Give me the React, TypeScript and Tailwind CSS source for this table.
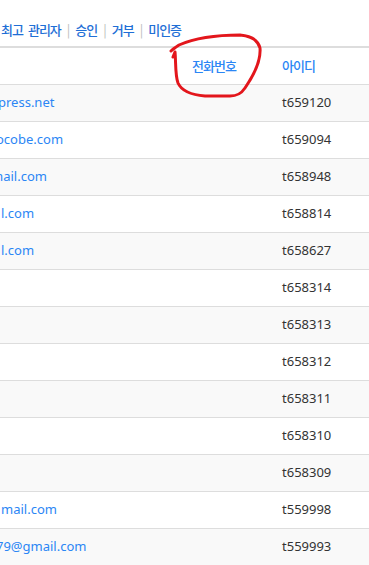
import React from 'react'

type Row = {
  id: string
  email: string
  shift: string
  striped: boolean
}

const rows: Row[] = [
  { id: 't659120', email: 'press.net', shift: 'ml-[-2px]', striped: true },
  { id: 't659094', email: 'ocobe.com', shift: 'ml-[-4px]', striped: false },
  { id: 't658948', email: 'mail.com', shift: 'ml-[-9px]', striped: true },
  { id: 't658814', email: 'l.com', shift: 'ml-[1px]', striped: false },
  { id: 't658627', email: 'l.com', shift: 'ml-[1px]', striped: true },
  { id: 't658314', email: '', shift: '', striped: false },
  { id: 't658313', email: '', shift: '', striped: true },
  { id: 't658312', email: '', shift: '', striped: false },
  { id: 't658311', email: '', shift: '', striped: true },
  { id: 't658310', email: '', shift: '', striped: false },
  { id: 't658309', email: '', shift: '', striped: true },
  { id: 't559998', email: 'mail.com', shift: 'ml-[1px]', striped: false },
  { id: 't559993', email: '79@gmail.com', shift: 'ml-[-4px]', striped: true },
]

const filters = ['승인', '거부', '미인증']

const App = () => {
  return (
    <div className="relative w-[369px] h-[565px] overflow-hidden bg-white font-['Noto_Sans','Noto_Sans_CJK_KR',sans-serif]">
      {/* filter links */}
      <div className="h-[46px] pt-[21px] flex items-start gap-[6px] text-[13px] leading-[18px] tracking-[-1px] font-['Noto_Sans_CJK_KR',sans-serif]">
        <a className="ml-[1px] text-[#1f6fd6] font-medium">
          최고<span className="inline-block w-[5px]" />관리자
        </a>
        {filters.map((f) => (
          <React.Fragment key={f}>
            <span className="text-[#bbbbbb]">|</span>
            <a className="text-[#1f6fd6] font-medium">{f}</a>
          </React.Fragment>
        ))}
      </div>

      {/* table */}
      <div className="border-t-2 border-[#dddddd]">
        <div className="grid grid-cols-[184px_90px_1fr] h-[37px] border-b border-[#dddddd] items-center text-[13px] tracking-[-1px] text-[#2b86f5] font-medium font-['Noto_Sans_CJK_KR',sans-serif]">
          <span />
          <span className="pl-[8px]">전화번호</span>
          <span className="pl-[8px]">아이디</span>
        </div>
        {rows.map((r) => (
          <div
            key={r.id}
            className={`grid grid-cols-[184px_90px_1fr] h-[37px] border-b border-[#dddddd] items-center text-[13px] ${
              r.striped ? 'bg-[#f9f9f9]' : 'bg-white'
            }`}
          >
            <div className="overflow-hidden">
              <span className={`block whitespace-nowrap text-[#2b86f5] ${r.shift}`}>{r.email}</span>
            </div>
            <span />
            <span className="pl-[8px] text-[#333333]">{r.id}</span>
          </div>
        ))}
      </div>

      {/* red hand-drawn annotation */}
      <svg className="absolute left-0 top-0 pointer-events-none" width="369" height="565" viewBox="0 0 369 565">
        <path
          d="M171 51 C173 49, 176 47, 179 45 C195 38, 215 35, 240 35 C252 36, 258 40, 260 48 C261 60, 254 75, 245 88 C241 94, 237 96, 230 96 L205 96 C192 95, 182 92, 178 83 C175 75, 176 62, 175 52 L173 57"
          fill="none"
          stroke="#e3161c"
          strokeWidth="3"
          strokeLinecap="round"
          strokeLinejoin="round"
        />
      </svg>
    </div>
  )
}

export default App
